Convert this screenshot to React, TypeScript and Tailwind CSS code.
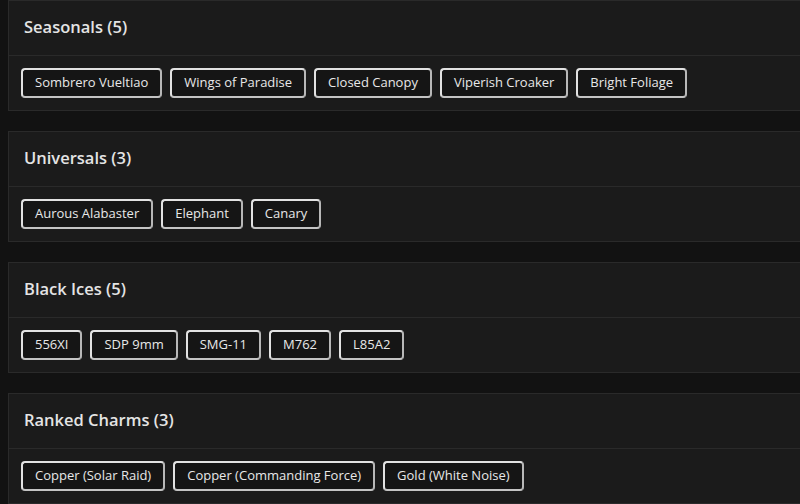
import React from "react";

const sections: { title: string; items: string[] }[] = [
  { title: "Seasonals (5)", items: ["Sombrero Vueltiao", "Wings of Paradise", "Closed Canopy", "Viperish Croaker", "Bright Foliage"] },
  { title: "Universals (3)", items: ["Aurous Alabaster", "Elephant", "Canary"] },
  { title: "Black Ices (5)", items: ["556XI", "SDP 9mm", "SMG-11", "M762", "L85A2"] },
  { title: "Ranked Charms (3)", items: ["Copper (Solar Raid)", "Copper (Commanding Force)", "Gold (White Noise)"] },
];

export default function App() {
  return (
    <div
      className="w-[800px] h-[504px] overflow-hidden bg-[#121212] pl-2 flex flex-col gap-5"
      style={{ fontFamily: '"Open Sans", sans-serif' }}
    >
      {sections.map((s) => (
        <div key={s.title} className="w-[820px] shrink-0 border border-[#2a2a2a] bg-[#1b1b1b]">
          <div className="h-[55px] pb-[2px] border-b border-[#2a2a2a] flex items-center pl-[15px] text-[16.5px] font-semibold text-[#e4e4e4]">
            {s.title}
          </div>
          <div className="h-[54px] flex items-center gap-2 pl-3">
            {s.items.map((it) => (
              <div
                key={it}
                className="h-[30px] px-[12px] flex items-center rounded-[4px] border-2 border-[#e2e2e2] border-r-[#b8b8b8] border-b-[#c4c4c4] text-[13px] text-[#e8e8e8] bg-[#151515]"
              >
                {it}
              </div>
            ))}
          </div>
        </div>
      ))}
    </div>
  );
}
